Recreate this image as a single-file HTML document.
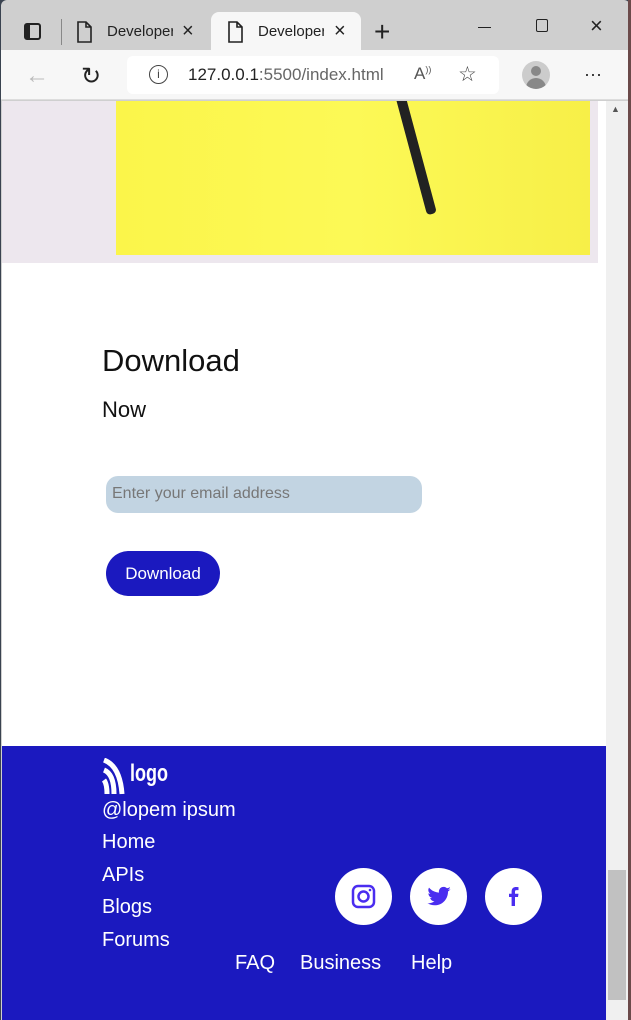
<!DOCTYPE html><html><head><style>
*{margin:0;padding:0;box-sizing:border-box}
body{width:631px;height:1020px;overflow:hidden;background:#3a4350;font-family:"Liberation Sans",sans-serif;position:relative}
.a{position:absolute}
</style></head><body>
<div class="a" style="left:1px;top:0;width:629px;height:1020px;background:#cfcfcf;border-radius:6px 6px 0 0"></div>
<div class="a" style="left:24px;top:23px;width:17px;height:17px;border:2px solid #222;border-radius:3px"></div>
<div class="a" style="left:26px;top:25px;width:4px;height:13px;background:#222"></div>
<div class="a" style="left:61px;top:19px;width:1px;height:26px;background:#888"></div>
<svg class="a" style="left:76px;top:21px" width="16" height="22"><path d="M2 1h8l5 5v15H2z M10 1v5h5" fill="none" stroke="#222" stroke-width="1.6"/></svg>
<div class="a" style="left:107px;top:23px;font-size:15px;color:#222;width:66px;overflow:hidden;white-space:nowrap">Developer</div>
<div class="a" style="left:182px;top:20px;font-size:20px;color:#222">×</div>
<div class="a" style="left:211px;top:12px;width:150px;height:40px;background:#f7f7f7;border-radius:8px 8px 0 0"></div>
<svg class="a" style="left:227px;top:21px" width="16" height="22"><path d="M2 1h8l5 5v15H2z M10 1v5h5" fill="none" stroke="#222" stroke-width="1.6"/></svg>
<div class="a" style="left:258px;top:23px;font-size:15px;color:#222;width:66px;overflow:hidden;white-space:nowrap">Developer</div>
<div class="a" style="left:334px;top:20px;font-size:20px;color:#222">×</div>
<div class="a" style="left:374px;top:16px;font-size:28px;font-weight:300;color:#222">+</div>
<div class="a" style="left:478px;top:27px;width:13px;height:1px;background:#222"></div>
<div class="a" style="left:536px;top:19px;width:12px;height:13px;border:1.5px solid #222;border-radius:2px"></div>
<div class="a" style="left:590px;top:13px;font-size:22px;color:#222">×</div>
<div class="a" style="left:1px;top:50px;width:629px;height:50px;background:#f7f7f7;border-bottom:1px solid #ddd"></div>
<div class="a" style="left:25px;top:62px;font-size:24px;color:#bbb">←</div>
<div class="a" style="left:81px;top:62px;font-size:24px;color:#222">↻</div>
<div class="a" style="left:127px;top:56px;width:372px;height:38px;background:#fff;border-radius:6px"></div>
<div class="a" style="left:149px;top:65px;width:19px;height:19px;border:1.5px solid #444;border-radius:50%;font-size:12px;text-align:center;line-height:16px;color:#444">i</div>
<div class="a" style="left:188px;top:65px;font-size:17px;color:#222">127.0.0.1<span style="color:#666">:5500/index.html</span></div>
<div class="a" style="left:414px;top:64px;font-size:17px;color:#555">A<sup style="font-size:9px">))</sup></div>
<div class="a" style="left:458px;top:62px;font-size:21px;color:#444">☆</div>
<div class="a" style="left:522px;top:61px;width:28px;height:28px;border-radius:50%;background:#ccc;overflow:hidden"><div style="margin:5px auto 0;width:10px;height:10px;border-radius:50%;background:#888"></div><div style="margin:2px auto 0;width:20px;height:12px;border-radius:10px 10px 0 0;background:#888"></div></div>
<div class="a" style="left:584px;top:64px;font-size:18px;color:#222">···</div>
<div class="a" style="left:2px;top:101px;width:604px;height:645px;background:#fff"></div>
<div class="a" style="left:2px;top:101px;width:596px;height:162px;background:#ede7ee"></div>
<div class="a" style="left:116px;top:101px;width:474px;height:154px;background:linear-gradient(90deg,#fbf54a,#fcf956 50%,#f7ef48);overflow:hidden">
<div class="a" style="left:311px;top:-60px;width:10px;height:173px;background:#222;border-radius:4px;transform:rotate(-15deg);transform-origin:bottom"></div>
</div>
<div class="a" style="left:102px;top:343px;font-size:31px;color:#111">Download</div>
<div class="a" style="left:102px;top:397px;font-size:22px;color:#111">Now</div>
<div class="a" style="left:106px;top:476px;width:316px;height:37px;background:#c2d4e2;border-radius:12px;font-size:16px;color:#777;padding:9px 6px;white-space:nowrap;overflow:hidden">Enter your email address</div>
<div class="a" style="left:106px;top:551px;width:114px;height:45px;background:#1b19bf;border-radius:23px;color:#fff;font-size:17px;text-align:center;line-height:45px">Download</div>
<div class="a" style="left:2px;top:746px;width:604px;height:274px;background:#1b19bf;color:#fff"></div>
<svg class="a" style="left:102px;top:758px" width="24" height="38"><path d="M2 2 Q18 8 20 36 M2 12 Q12 16 12 36 M2 22 Q5 26 5 36" stroke="#fff" stroke-width="5" fill="none"/></svg>
<div class="a" style="left:130px;top:760px;font-size:24px;color:#fff;font-weight:bold;transform:scaleX(.75);transform-origin:left">logo</div>
<div class="a" style="left:102px;top:799px;font-size:20px;color:#fff">@lopem ipsum</div>
<div class="a" style="left:102px;top:831px;font-size:20px;color:#fff">Home</div>
<div class="a" style="left:102px;top:864px;font-size:20px;color:#fff">APIs</div>
<div class="a" style="left:102px;top:896px;font-size:20px;color:#fff">Blogs</div>
<div class="a" style="left:102px;top:929px;font-size:20px;color:#fff">Forums</div>
<div class="a" style="left:235px;top:952px;font-size:20px;color:#fff">FAQ</div>
<div class="a" style="left:300px;top:952px;font-size:20px;color:#fff">Business</div>
<div class="a" style="left:411px;top:952px;font-size:20px;color:#fff">Help</div>
<div class="a" style="left:335px;top:868px;width:57px;height:57px;border-radius:50%;background:#fff"><svg width="57" height="57"><rect x="18" y="18" width="21" height="21" rx="5" fill="none" stroke="#4a2df0" stroke-width="2.5"/><circle cx="28.5" cy="28.5" r="5" fill="none" stroke="#4a2df0" stroke-width="2.5"/><circle cx="35" cy="22" r="1.3" fill="#4a2df0"/></svg></div>
<div class="a" style="left:410px;top:868px;width:57px;height:57px;border-radius:50%;background:#fff"><svg width="57" height="57"><path d="M41 21c-1 .5-2 .7-3 .8 1-.6 2-1.6 2-2.7-1 .6-2 1-3 1.2a4.7 4.7 0 0 0-8 4.3c-4-.2-7.5-2-10-5-1.4 2.3-.6 5 1.4 6.3-.8 0-1.5-.2-2-.6 0 2.3 1.6 4.2 3.7 4.6-.7.2-1.4.2-2 .1.6 1.9 2.3 3.2 4.4 3.3-2 1.5-4.5 2.2-7 2 2.2 1.3 4.6 2 7.2 2 8.7 0 13.5-7.3 13.3-13.8 1-.7 1.8-1.5 2.5-2.5z" fill="#4a2df0"/></svg></div>
<div class="a" style="left:485px;top:868px;width:57px;height:57px;border-radius:50%;background:#fff"><svg width="57" height="57"><path d="M30 38V29h3l.5-3.3H30v-2c0-1 .3-1.6 1.7-1.6h1.8v-3a20 20 0 0 0-2.6-.1c-2.6 0-4.3 1.6-4.3 4.4v2.3H24V29h2.6v9z" fill="#4a2df0"/></svg></div>
<div class="a" style="left:606px;top:101px;width:22px;height:919px;background:#f0f0f0"></div>
<div class="a" style="left:608px;top:870px;width:18px;height:130px;background:#c1c1c1"></div>
<div class="a" style="left:611px;top:104px;font-size:9px;color:#555">▲</div>
<div class="a" style="left:628px;top:0;width:3px;height:1020px;background:#6b4a4a"></div>
</body></html>
